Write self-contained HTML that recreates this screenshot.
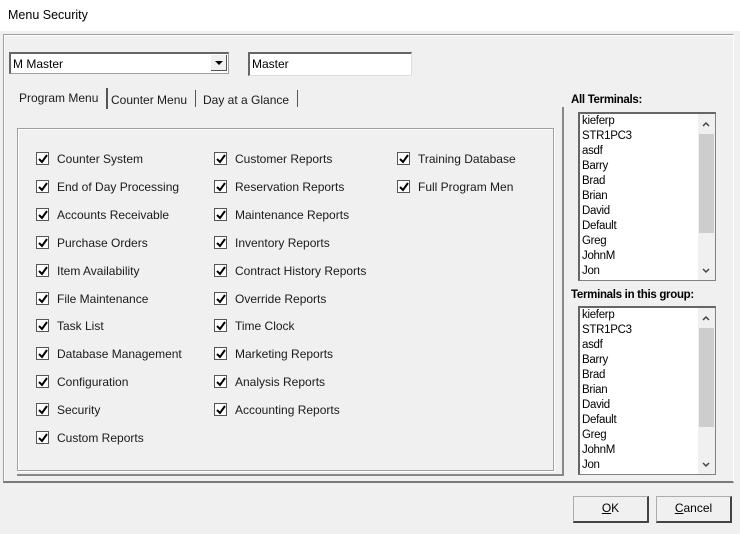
<!DOCTYPE html>
<html><head><style>
*{box-sizing:border-box;margin:0;padding:0}
body{width:740px;height:534px;background:#f0f0f0;font-family:"Liberation Sans",sans-serif;font-size:12px;color:#000;position:relative;overflow:hidden}
.abs{position:absolute}
.title{left:0;top:0;width:740px;height:31px;background:#fff;}
.title span{position:absolute;left:8px;top:8px;font-size:12.5px}
.cb{position:absolute;width:13px;height:13px;border:1px solid #555;background:#fff}
.cb svg{position:absolute;left:1px;top:1px}
.lbl{position:absolute;font-size:12px;color:#1a1a1a;white-space:nowrap}
.list{position:absolute;background:#fff;border:1px solid #828282;border-top:2px solid #666;border-left:2px solid #666}
.list .it{position:absolute;left:2px;font-size:11.5px;letter-spacing:-0.3px}
.sb{position:absolute;right:0;top:0;width:17px;bottom:0;background:#f0f0f0}
.thumb{position:absolute;left:1px;top:20px;width:15px;height:99px;background:#cdcdcd}
.arr{position:absolute;left:4px;width:8px;height:8px}
.btn{position:absolute;border:1px solid #adadad;border-right:2px solid #444;border-bottom:2px solid #444;background:#f0f0f0;text-align:center;line-height:22px;font-size:12px}
</style></head><body>
<div class="abs title"><span>Menu Security</span></div>
<div class="abs" style="left:3px;top:34px;width:731px;height:449px;border:1px solid #a0a0a0;border-right:1px solid #fff;border-bottom:2px solid #7a7a7a;box-shadow:inset 1px 1px 0 #fff"></div>
<div class="abs" style="left:9px;top:52px;width:220px;height:22px;background:#fff;border:1px solid #a0a0a0;border-top:2px solid #666;border-left:2px solid #666"><span style="position:absolute;left:2px;top:3px">M Master</span>
<div style="position:absolute;right:1px;top:1px;width:16px;height:16px;background:#f0f0f0;border-right:1px solid #555;border-bottom:1px solid #555"><div style="position:absolute;left:4px;top:6px;border-left:4px solid transparent;border-right:4px solid transparent;border-top:4px solid #000"></div></div></div>
<div class="abs" style="left:248px;top:52px;width:164px;height:24px;background:#fff;border:1px solid #ddd;border-top:2px solid #666;border-left:2px solid #666"><span style="position:absolute;left:2px;top:3px">Master</span></div>
<div class="abs lbl" style="left:19px;top:91px">Program Menu</div>
<div class="abs" style="left:106px;top:88px;width:2px;height:21px;background:#555"></div>
<div class="abs lbl" style="left:111px;top:93px">Counter Menu</div>
<div class="abs" style="left:195px;top:90px;width:1px;height:17px;background:#555"></div>
<div class="abs lbl" style="left:203px;top:93px">Day at a Glance</div>
<div class="abs" style="left:297px;top:90px;width:1px;height:17px;background:#555"></div>
<div class="abs" style="left:17px;top:107px;width:547px;height:369px;border-right:2px solid #888;border-bottom:2px solid #888"></div>
<div class="abs" style="left:17px;top:128px;width:537px;height:343px;border:1px solid #a0a0a0;box-shadow:1px 1px 0 #fff,inset 1px 1px 0 #fff"></div>
<div id="cbs"></div>
<div class="abs" style="left:571px;top:94px;font-weight:bold;font-size:11.5px;letter-spacing:-0.3px">All Terminals:</div>
<div class="list" style="left:578px;top:112px;width:138px;height:169px"><div class="sb"><div class="thumb"></div><svg class="arr" style="top:6px" viewBox="0 0 8 8"><path d="M1 6L4 3L7 6" stroke="#444" stroke-width="1.5" fill="none"/></svg><svg class="arr" style="bottom:5px" viewBox="0 0 8 8"><path d="M1 2L4 5L7 2" stroke="#444" stroke-width="1.5" fill="none"/></svg></div>
<div class="it" style="top:1px">kieferp</div><div class="it" style="top:16px">STR1PC3</div><div class="it" style="top:31px">asdf</div><div class="it" style="top:46px">Barry</div><div class="it" style="top:61px">Brad</div><div class="it" style="top:76px">Brian</div><div class="it" style="top:91px">David</div><div class="it" style="top:106px">Default</div><div class="it" style="top:121px">Greg</div><div class="it" style="top:136px">JohnM</div><div class="it" style="top:151px">Jon</div></div>
<div class="abs" style="left:571px;top:289px;font-weight:bold;font-size:11.5px;letter-spacing:-0.3px">Terminals in this group:</div>
<div class="list" style="left:578px;top:306px;width:138px;height:169px"><div class="sb"><div class="thumb"></div><svg class="arr" style="top:6px" viewBox="0 0 8 8"><path d="M1 6L4 3L7 6" stroke="#444" stroke-width="1.5" fill="none"/></svg><svg class="arr" style="bottom:5px" viewBox="0 0 8 8"><path d="M1 2L4 5L7 2" stroke="#444" stroke-width="1.5" fill="none"/></svg></div>
<div class="it" style="top:1px">kieferp</div><div class="it" style="top:16px">STR1PC3</div><div class="it" style="top:31px">asdf</div><div class="it" style="top:46px">Barry</div><div class="it" style="top:61px">Brad</div><div class="it" style="top:76px">Brian</div><div class="it" style="top:91px">David</div><div class="it" style="top:106px">Default</div><div class="it" style="top:121px">Greg</div><div class="it" style="top:136px">JohnM</div><div class="it" style="top:151px">Jon</div></div>
<div class="btn" style="left:573px;top:496px;width:76px;height:27px"><u>O</u>K</div>
<div class="btn" style="left:656px;top:496px;width:76px;height:27px"><u>C</u>ancel</div>
<script>
var cols=[[36,["Counter System","End of Day Processing","Accounts Receivable","Purchase Orders","Item Availability","File Maintenance","Task List","Database Management","Configuration","Security","Custom Reports"]],
[214,["Customer Reports","Reservation Reports","Maintenance Reports","Inventory Reports","Contract History Reports","Override Reports","Time Clock","Marketing Reports","Analysis Reports","Accounting Reports"]],
[397,["Training Database","Full Program Men"]]];
var h="";
cols.forEach(function(c){c[1].forEach(function(t,i){var y=152+i*27.9;
h+='<div class="cb" style="left:'+c[0]+'px;top:'+y+'px"><svg width="10" height="10"><path d="M1 5 L4 8 L9 1" stroke="#000" stroke-width="2" fill="none"/></svg></div><div class="lbl" style="left:'+(c[0]+21)+'px;top:'+y+'px">'+t+'</div>';});});
document.getElementById("cbs").innerHTML=h;
</script>
</body></html>
